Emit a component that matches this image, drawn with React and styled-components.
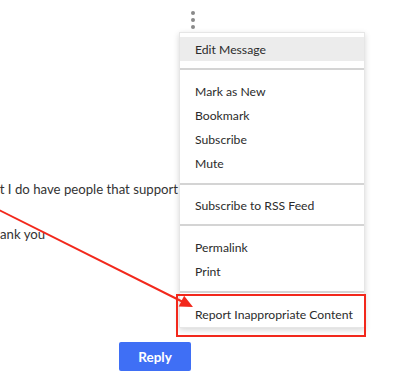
import React from "react";
import styled, { createGlobalStyle } from "styled-components";

const Global = createGlobalStyle`
  html, body { margin: 0; padding: 0; background: #fff; }
  body { font-family: "Lato", "Liberation Sans", sans-serif; color: #333; }
`;

const Page = styled.div`
  position: relative;
  width: 400px;
  height: 390px;
  overflow: hidden;
  background: #fff;
`;

const Post = styled.div`
  display: flex;
  flex-direction: column;
  padding-top: 10px;
`;

const KebabRow = styled.div`
  display: flex;
  padding-left: 190px;
`;

const Kebab = styled.button`
  display: flex;
  flex-direction: column;
  align-items: center;
  gap: 3px;
  width: 5px;
  padding: 1px 0;
  border: 0;
  background: none;
`;

const Dot = styled.span`
  width: 4px;
  height: 4px;
  border-radius: 50%;
  background: #8a8a8a;
`;

const Body = styled.div`
  margin-top: 148px;
  margin-left: -15px;
  font-size: 13.2px;
  line-height: 22px;
  color: #333;
  white-space: nowrap;
`;

const Para = styled.p`
  margin: 0 0 23px;
`;

const ReplyRow = styled.div`
  display: flex;
  padding-left: 119px;
  margin-top: 74px;
`;

const ReplyButton = styled.button`
  width: 72px;
  height: 29px;
  border: 0;
  border-radius: 2px;
  background: #3f6ff5;
  color: #fff;
  font-family: "Lato", "Liberation Sans", sans-serif;
  font-size: 13.5px;
  font-weight: 700;
`;

const Menu = styled.div`
  position: absolute;
  top: 32px;
  left: 179px;
  width: 184px;
  background: #fff;
  border: 1px solid #e6e6e6;
  box-shadow: 0 2px 6px rgba(0, 0, 0, 0.16);
  display: flex;
  flex-direction: column;
`;

const Group = styled.div`
  display: flex;
  flex-direction: column;
  padding: ${(p) => p.$pt}px 0 ${(p) => p.$pb}px;
  border-top: ${(p) => (p.$sep ? "2px solid #d4d4d4" : "0")};
`;

const Item = styled.div`
  height: 24px;
  display: flex;
  align-items: center;
  padding-left: 15px;
  font-size: 12.2px;
  color: #2b2b2b;
  background: ${(p) => (p.$active ? "#ececec" : "transparent")};
`;

const Highlight = styled.div`
  position: absolute;
  left: 176px;
  top: 294px;
  width: 186px;
  height: 39px;
  border: 2px solid #f2281c;
`;

const Overlay = styled.svg`
  position: absolute;
  inset: 0;
  pointer-events: none;
`;

const groups = [
  { pt: 4, pb: 7, sep: false, items: ["Edit Message"], active: 0 },
  { pt: 9, pb: 8, sep: true, items: ["Mark as New", "Bookmark", "Subscribe", "Mute"] },
  { pt: 8, pb: 7, sep: true, items: ["Subscribe to RSS Feed"] },
  { pt: 9, pb: 8, sep: true, items: ["Permalink", "Print"] },
  { pt: 9, pb: 1, sep: true, items: ["Report Inappropriate Content"] },
];

export default function App() {
  return (
    <>
      <Global />
      <Page>
        <Post>
          <KebabRow>
            <Kebab aria-label="More options">
              <Dot />
              <Dot />
              <Dot />
            </Kebab>
          </KebabRow>
          <Body>
            <Para>but I do have people that support me</Para>
            <Para>Thank you</Para>
          </Body>
          <ReplyRow>
            <ReplyButton>Reply</ReplyButton>
          </ReplyRow>
        </Post>
        <Menu>
          {groups.map((g, gi) => (
            <Group key={gi} $pt={g.pt} $pb={g.pb} $sep={g.sep}>
              {g.items.map((it, ii) => (
                <Item key={it} $active={g.active === ii}>
                  {it}
                </Item>
              ))}
            </Group>
          ))}
        </Menu>
        <Highlight />
        <Overlay width="400" height="390" viewBox="0 0 400 390">
          <line x1="-6" y1="207.5" x2="183" y2="302" stroke="#f2281c" strokeWidth="2" />
          <polygon points="193,307 178.7,306.6 184.1,295.8" fill="#f2281c" />
        </Overlay>
      </Page>
    </>
  );
}
